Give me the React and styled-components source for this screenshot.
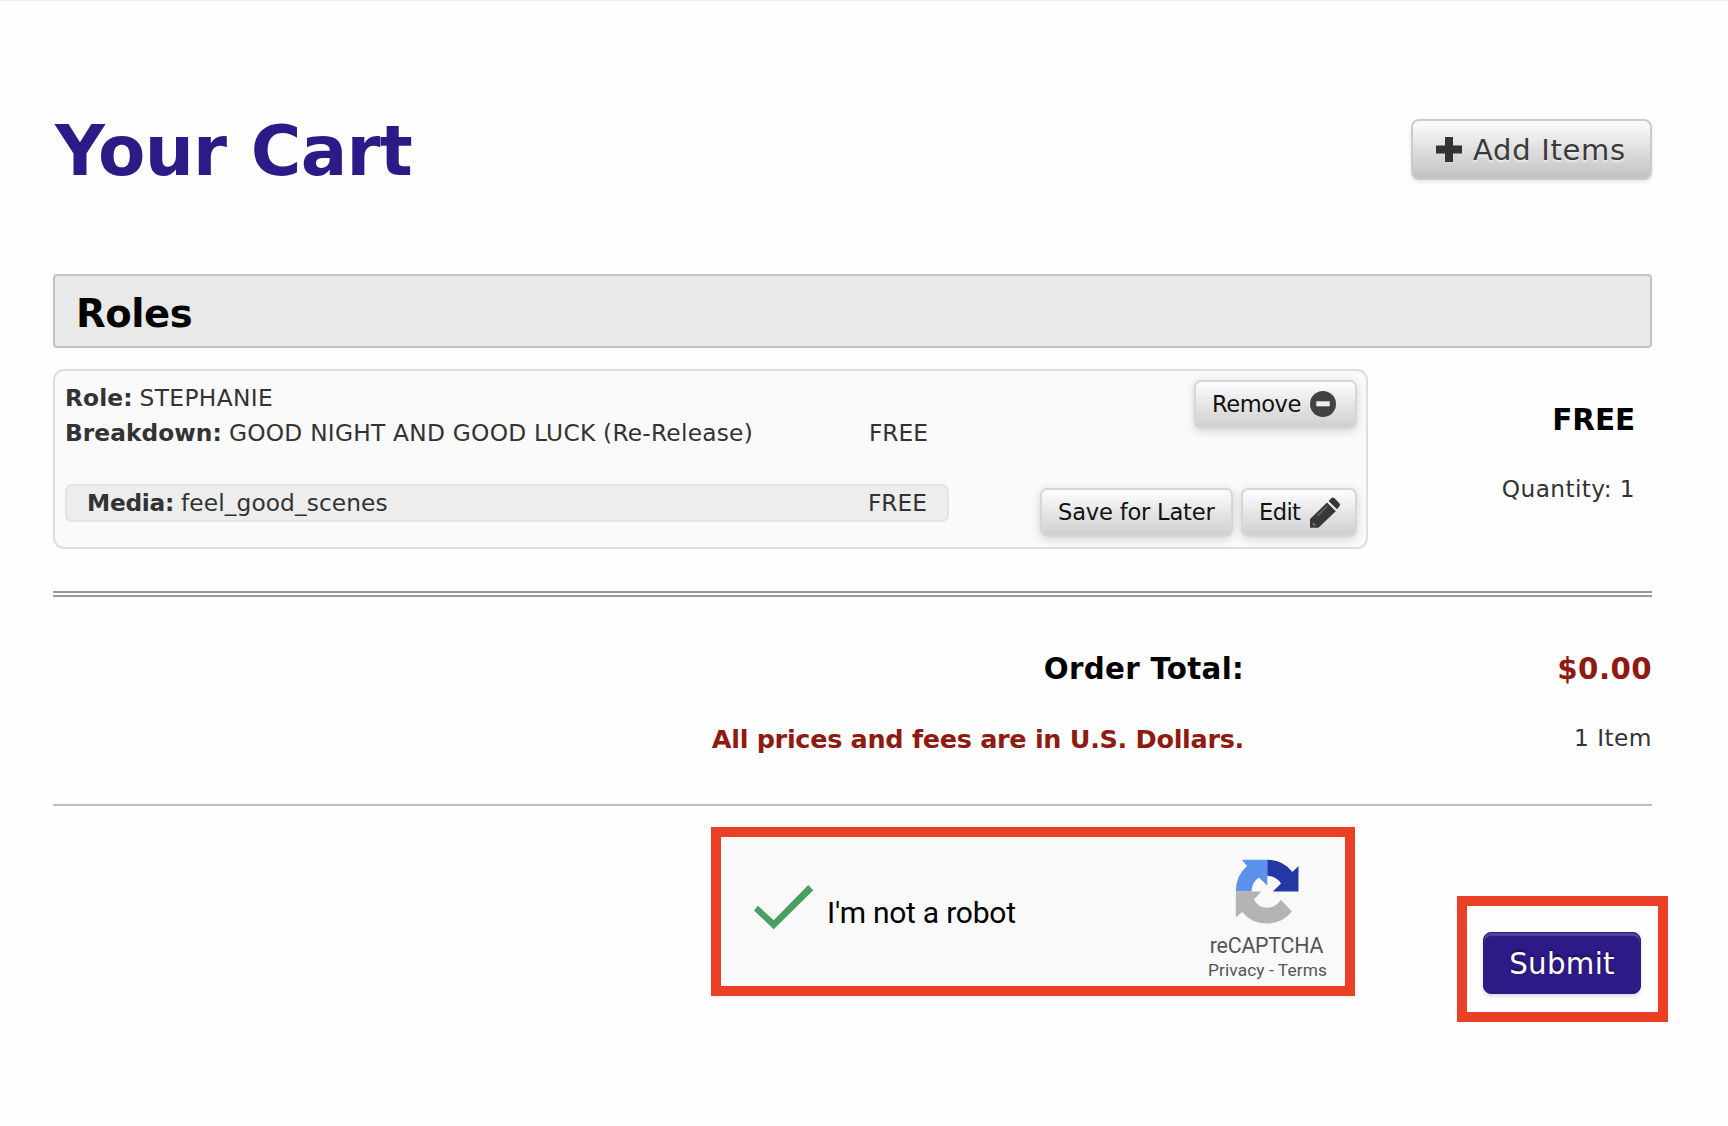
import styled, { createGlobalStyle } from "styled-components"

export default function App() {
  return (
    <PageSC>
      <GlobalStyle />

      <HeaderSC>
        <Title>Your Cart</Title>
        <AddButton>
          <PlusIcon />
          <span>Add Items</span>
        </AddButton>
      </HeaderSC>

      <SectionBar>Roles</SectionBar>

      <CartRow>
        <CardSC>
          <DetailsSC>
            <DetailLine>
              <Label $spacing={0.1}>Role:</Label>
              <Value $spacing={0.37}>STEPHANIE</Value>
            </DetailLine>
            <DetailLine>
              <Label $spacing={0.05}>Breakdown:</Label>
              <Value $spacing={0.24}>GOOD NIGHT AND GOOD LUCK (Re-Release)</Value>
              <LinePrice>FREE</LinePrice>
            </DetailLine>
            <MediaLine>
              <Label $spacing={-0.27}>Media:</Label>
              <Value $spacing={0.09}>feel_good_scenes</Value>
              <LinePrice>FREE</LinePrice>
            </MediaLine>
          </DetailsSC>

          <ActionsSC>
            <CardButton $width={163} $spacing={-0.46}>
              Remove
              <MinusIcon />
            </CardButton>
            <ButtonGroup>
              <CardButton $width={193} $spacing={-0.2}>Save for Later</CardButton>
              <CardButton $width={116} $spacing={-0.6}>
                Edit
                <PencilIcon />
              </CardButton>
            </ButtonGroup>
          </ActionsSC>
        </CardSC>

        <RowSummary>
          <RowPrice>FREE</RowPrice>
          <Quantity>Quantity: 1</Quantity>
        </RowSummary>
      </CartRow>

      <TotalsSC>
        <TotalLabel>Order Total:</TotalLabel>
        <TotalAmount>$0.00</TotalAmount>
        <CurrencyNote>All prices and fees are in U.S. Dollars.</CurrencyNote>
        <ItemCount>1 Item</ItemCount>
      </TotalsSC>

      <CheckoutSC>
        <CaptchaBox>
          <CheckMark />
          <CaptchaText>I'm not a robot</CaptchaText>
          <CaptchaBadge>
            <CaptchaLogo />
            <BadgeName>reCAPTCHA</BadgeName>
            <BadgeLinks>Privacy - Terms</BadgeLinks>
          </CaptchaBadge>
        </CaptchaBox>
        <SubmitFrame>
          <SubmitButton>Submit</SubmitButton>
        </SubmitFrame>
      </CheckoutSC>
    </PageSC>
  )
}

function PlusIcon() {
  return (
    <svg width="26" height="25" viewBox="0 0 26 25">
      <path d="M9 0h8v8.5h9v8h-9V25H9v-8.5H0v-8h9z" fill="#333" />
    </svg>
  )
}

function MinusIcon() {
  return (
    <svg width="26" height="26" viewBox="0 0 26 26">
      <circle cx="13" cy="13" r="13" fill="#424242" />
      <rect x="6.3" y="10.3" width="13.4" height="5" fill="#eee" />
    </svg>
  )
}

function PencilIcon() {
  return (
    <svg width="32" height="33" viewBox="0 0 32 33">
      <path d="M1 31.8V23L18 6.6l8.8 8.6L9.4 31.8z" fill="#383838" />
      <path d="M19.6 5.1l3-3q1.3-1.2 2.6 0l5.4 5.4q1.2 1.3 0 2.6l-2.6 3.2z" fill="#383838" />
      <path d="M8.6 19.6L18.6 10" stroke="#666" strokeWidth="1.6" />
      <path d="M4 27.600l2 2" stroke="#8a8a8a" strokeWidth="1.4" />
    </svg>
  )
}

function CheckMark() {
  return (
    <CheckSvg width="60" height="46" viewBox="0 0 60 46">
      <path d="M0 26.4l3.9-4.7 15.8 14.6L54.3 1l4.9 5.3-39.5 39z" fill="#4a9e61" />
    </CheckSvg>
  )
}

function CaptchaLogo() {
  return (
    <svg width="66" height="65" viewBox="0 0 64 64">
      <path d="M6.3.7H31.3V26L23 18.2Q15.8 23 15.7 32H.3Q.3 16.500 11.300 7z" fill="#5a92ee" />
      <path d="M31.3.7Q46.500.7 56 12.800L62 7V32H36.700L44.800 24Q40 16.700 31.300 16.500z" fill="#2338a4" />
      <path d="M.3 32H25.500L18 39.800Q22.800 48 31 48 39.800 48 44.600 40.200L55.600 51.800Q46 63.600 31 63.600 15.500 63.600 6.600 52.200L.3 57.700z" fill="#b4b4b4" />
    </svg>
  )
}

const GlobalStyle = createGlobalStyle`
  * {
    box-sizing: border-box;
  }
  body {
    margin: 0;
    background-color: #fff;
  }
`;

const PageSC = styled.div`
  width: 1728px;
  height: 1126px;
  padding: 0 76px 0 53px;
  border-top: 1px solid #ececec;
  background-color: #fefefe;
  color: #333;
  font-family: "DejaVu Sans", Verdana, sans-serif;
  overflow: hidden;
`;

const HeaderSC = styled.div`
  display: flex;
  justify-content: space-between;
  align-items: flex-start;
  height: 273px;
  padding-top: 110px;
`;

const Title = styled.h1`
  margin: 0 0 0 2px;
  font-size: 69px;
  line-height: 80px;
  letter-spacing: -0.7px;
  word-spacing: 1px;
  color: #2e1a87;
`;

const AddButton = styled.button`
  display: flex;
  align-items: center;
  gap: 11px;
  width: 241px;
  height: 61px;
  margin-top: 8px;
  padding: 0 0 1px 23px;
  border: 2px solid #cbcbcb;
  border-radius: 8px;
  background: linear-gradient(#fcfcfc, #c2c2c2);
  box-shadow: 0 2px 4px rgba(0, 0, 0, 0.1);
  font-family: inherit;
  font-size: 29px;
  line-height: 34px;
  letter-spacing: 0.7px;
  color: #3a3a3a;
  text-shadow: 0 2px 2px rgba(255, 255, 255, 0.6);

  span {
    padding-top: 2px;
  }
`;

const SectionBar = styled.h2`
  height: 74px;
  margin: 0;
  padding: 3px 0 0 21px;
  border: 2px solid #c3c3c3;
  border-radius: 4px;
  background-color: #e9e9e9;
  font-size: 38.5px;
  line-height: 70px;
  letter-spacing: -0.4px;
  color: #000;
`;

const CartRow = styled.div`
  display: flex;
  justify-content: space-between;
  margin-top: 21px;
`;

const CardSC = styled.div`
  display: flex;
  justify-content: space-between;
  width: 1315px;
  height: 180px;
  padding: 9px 9px 10px 10px;
  border: 2px solid #dedede;
  border-radius: 11px;
  background-color: #fafafa;
`;

const DetailsSC = styled.div`
  width: 884px;
`;

const DetailLine = styled.div`
  display: flex;
  gap: 7px;
  padding-right: 21px;
  font-size: 23.3px;
  line-height: 35px;
`;

const MediaLine = styled(DetailLine)`
  height: 38px;
  margin-top: 34px;
  padding: 0 20px;
  border: 2px solid #e4e4e4;
  border-radius: 7px;
  background-color: #ededed;
  line-height: 33px;
`;

const Label = styled.span`
  font-weight: bold;
  letter-spacing: ${props => props.$spacing}px;
`;

const Value = styled.span`
  letter-spacing: ${props => props.$spacing}px;
`;

const LinePrice = styled.span`
  margin-left: auto;
`;

const ActionsSC = styled.div`
  display: flex;
  flex-direction: column;
  justify-content: space-between;
  align-items: flex-end;
`;

const ButtonGroup = styled.div`
  display: flex;
  gap: 8px;
`;

const CardButton = styled.button`
  display: flex;
  align-items: center;
  gap: 9px;
  width: ${props => props.$width}px;
  height: 49px;
  padding: 0 0 1px 16px;
  border: 2px solid #d6d6d6;
  border-radius: 7px;
  background: linear-gradient(#fdfcfe, #cfcfcf);
  box-shadow: 0 2px 10px rgba(0, 0, 0, 0.16);
  font-family: inherit;
  font-size: 22.6px;
  letter-spacing: ${props => props.$spacing}px;
  white-space: nowrap;
  color: #111;
`;

const RowSummary = styled.div`
  padding: 31px 17px 0 0;
  text-align: right;
`;

const RowPrice = styled.div`
  font-size: 29.5px;
  font-weight: bold;
  line-height: 40px;
  letter-spacing: -0.1px;
  color: #000;
`;

const Quantity = styled.div`
  margin-top: 31px;
  font-size: 23.3px;
  line-height: 36px;
  letter-spacing: 0.38px;
`;

const TotalsSC = styled.div`
  display: grid;
  grid-template-columns: 1191px 1fr;
  row-gap: 30px;
  margin-top: 42px;
  padding: 52px 0 45px;
  border-top: 6px double #999;
  border-bottom: 2px solid #bdbdbd;
  text-align: right;
`;

const TotalLabel = styled.div`
  font-size: 29.3px;
  font-weight: bold;
  line-height: 40px;
  letter-spacing: 0.3px;
  color: #000;
`;

const TotalAmount = styled(TotalLabel)`
  letter-spacing: 0.4px;
  color: #8f1a10;
`;

const CurrencyNote = styled.div`
  font-size: 25.5px;
  font-weight: bold;
  line-height: 40px;
  letter-spacing: -0.3px;
  color: #8f1a10;
`;

const ItemCount = styled.div`
  font-size: 23.3px;
  line-height: 38px;
  letter-spacing: 0.45px;
`;

const CheckoutSC = styled.div`
  display: flex;
  justify-content: space-between;
  align-items: flex-start;
  margin: 21px -16px 0 658px;
`;

const CaptchaBox = styled.div`
  display: flex;
  align-items: center;
  width: 644px;
  height: 169px;
  padding: 0 12px 0 33px;
  border: 10px solid #ea4025;
  background-color: #f9f9f9;
  font-family: Roboto, sans-serif;
  box-shadow: 0 2px 3px rgba(0, 0, 0, 0.06);
`;

const CheckSvg = styled.svg`
  margin-bottom: 9px;
`;

const CaptchaText = styled.span`
  margin-left: 13px;
  padding-top: 2px;
  font-size: 30px;
  letter-spacing: -0.24px;
  color: #000;
`;

const CaptchaBadge = styled.div`
  display: flex;
  flex-direction: column;
  align-items: center;
  align-self: flex-start;
  width: 131px;
  margin-left: auto;
  padding-top: 22px;
  color: #555;
`;

const BadgeName = styled.div`
  margin: 10px 2px 0 0;
  font-size: 21.4px;
  line-height: 24px;
  letter-spacing: -0.23px;
`;

const BadgeLinks = styled.div`
  margin-top: 2px;
  font-size: 17.3px;
  line-height: 20px;
  letter-spacing: 0.1px;
`;

const SubmitFrame = styled.div`
  width: 211px;
  height: 126px;
  margin-top: 69px;
  padding: 26px 16px;
  border: 10px solid #ea4025;
`;

const SubmitButton = styled.button`
  width: 158px;
  height: 62px;
  padding: 2px 0 0;
  border: 1px solid #2e1a87;
  border-radius: 8px;
  background-color: #2e1a87;
  box-shadow: inset 0 3px 1px rgba(255, 255, 255, 0.18), 0 2px 4px rgba(0, 0, 0, 0.15);
  font-family: inherit;
  font-size: 29.3px;
  letter-spacing: 0.3px;
  color: #fff;
  text-shadow: 0 -2px 2px rgba(0, 0, 0, 0.4);
`;
